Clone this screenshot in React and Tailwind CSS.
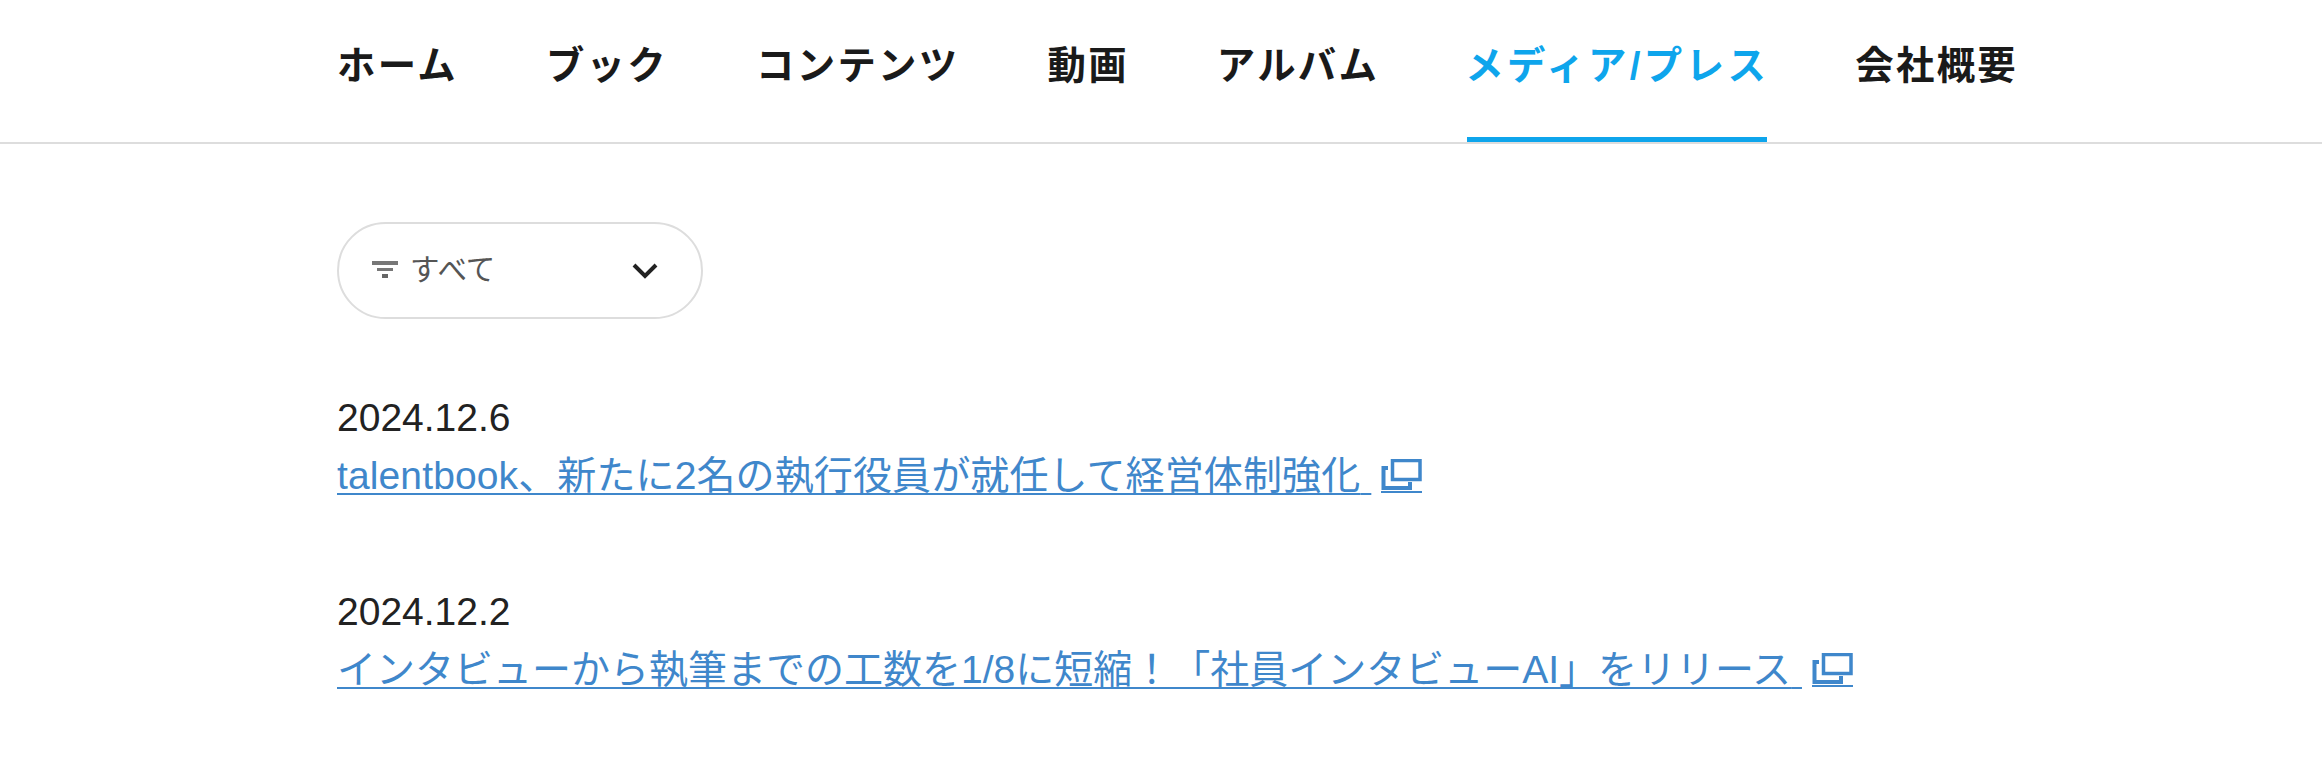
const FONT = 'font-["Liberation_Sans","Noto_Sans_CJK_JP",sans-serif]';

const navItems = ['ホーム', 'ブック', 'コンテンツ', '動画', 'アルバム', 'メディア/プレス', '会社概要'];

const news = [
  { date: '2024.12.6', title: 'talentbook、新たに2名の執行役員が就任して経営体制強化', spacing: 'tracking-[0.12px]' },
  { date: '2024.12.2', title: 'インタビューから執筆までの工数を1/8に短縮！「社員インタビューAI」をリリース', spacing: '' },
];

function FilterIcon() {
  return (
    <svg width="26" height="20" viewBox="0 0 26 20" className="shrink-0">
      <rect x="0" y="0" width="26" height="4" fill="#777" />
      <rect x="5" y="7" width="16" height="3" fill="#777" />
      <rect x="10" y="13" width="6" height="4" fill="#666" />
    </svg>
  );
}

function ChevronIcon() {
  return (
    <svg width="26" height="16" viewBox="0 0 26 16" fill="none" stroke="#222" strokeWidth="4">
      <path d="M2 2 L13 13 L24 2" />
    </svg>
  );
}

function ExternalIcon() {
  return (
    <svg width="41" height="34" viewBox="0 0 41 34" fill="none" stroke="#3f87cb" className="inline-block align-[-4px] ml-[10px]">
      <rect x="11.5" y="1.5" width="27.5" height="19" strokeWidth="3.5" />
      <path d="M7 9 H2.5 V29 H29 V23" strokeWidth="4" />
      <path d="M0 33 H41" strokeWidth="2" />
    </svg>
  );
}

export default function App() {
  return (
    <div className={`min-h-[762px] bg-white ${FONT}`}>
      <nav className="h-[144px] border-b-2 border-[#dddddd]">
        <ul className="flex h-[142px] gap-[88px] pl-[337px]">
          {navItems.map((item) => (
            <li
              key={item}
              className={
                item === 'メディア/プレス'
                  ? 'flex w-[300px] items-center justify-center pb-[5px] text-[38.4px] font-bold tracking-[3.4px] whitespace-nowrap text-[#0ea5ec] border-b-[5px] border-[#0ea5ec]'
                  : 'flex items-center pb-[5px] text-[38.4px] font-bold tracking-[2.3px] whitespace-nowrap text-[#1a1a1a] border-b-[5px] border-transparent'
              }
            >
              {item}
            </li>
          ))}
        </ul>
      </nav>

      <main className="pl-[337px] pt-[78px]">
        <button className="flex h-[97px] w-[366px] items-center rounded-full border-2 border-[#dddddd] pl-[33px] pr-[43px]">
          <FilterIcon />
          <span className="ml-[12px] text-[29.5px] text-[#555555]">すべて</span>
          <span className="ml-auto">
            <ChevronIcon />
          </span>
        </button>

        <div className="mt-[70px] flex flex-col gap-[79px]">
          {news.map((n) => (
            <div key={n.date} className="text-[39px] leading-[57.6px]">
              <p className="text-[#222222]">{n.date}</p>
              <a href="#" className={`text-[#3f87cb] whitespace-nowrap ${n.spacing}`}>
                <span className="underline decoration-2 underline-offset-[4px]">{n.title} </span>
                <ExternalIcon />
              </a>
            </div>
          ))}
        </div>
      </main>
    </div>
  );
}
